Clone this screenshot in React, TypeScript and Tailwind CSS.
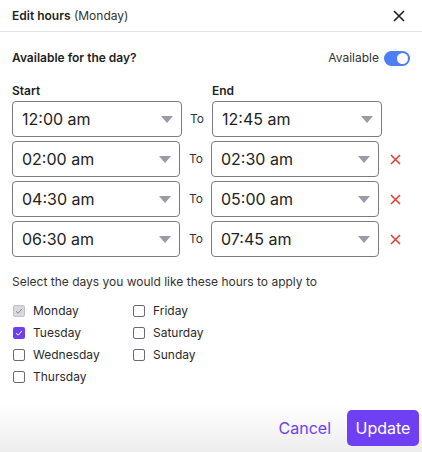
import React, { useState } from "react";

const rows = [
  { start: "12:00 am", end: "12:45 am", removable: false },
  { start: "02:00 am", end: "02:30 am", removable: true },
  { start: "04:30 am", end: "05:00 am", removable: true },
  { start: "06:30 am", end: "07:45 am", removable: true },
];

const Caret = () => (
  <svg width="12" height="7" viewBox="0 0 12 7" className="shrink-0">
    <path d="M0 0 L12 0 L6 7 Z" fill="#9c9aa6" />
  </svg>
);

const TimeSelect = ({ value, wide }: { value: string; wide: boolean }) => (
  <div
    className={`flex items-center justify-between h-[36px] border border-[#7b7a85] rounded-[4px] pl-[9px] pr-[8px] ${
      wide ? "w-[170px]" : "w-[168px]"
    }`}
  >
    <span className="text-[16px] text-[#222]">{value}</span>
    <Caret />
  </div>
);

const Check = ({ state }: { state: "disabled" | "checked" | "off" }) => {
  if (state === "disabled") {
    return (
      <span className="w-[12px] h-[12px] rounded-[2px] bg-[#d9d8de] border border-[#c4c3cb] flex items-center justify-center">
        <svg width="8" height="8" viewBox="0 0 8 8">
          <path d="M1 4.2 L3.2 6.2 L7 1.8" stroke="#8d8b96" strokeWidth="1" fill="none" />
        </svg>
      </span>
    );
  }
  if (state === "checked") {
    return (
      <span className="w-[12px] h-[12px] rounded-[2px] bg-[#6e3ff3] flex items-center justify-center">
        <svg width="8" height="8" viewBox="0 0 8 8">
          <path d="M1 4.2 L3.2 6.2 L7 1.8" stroke="#fff" strokeWidth="1" fill="none" />
        </svg>
      </span>
    );
  }
  return <span className="w-[12px] h-[12px] rounded-[2px] border-[1.5px] border-[#6b6a75] bg-white" />;
};

const Day = ({ label, state }: { label: string; state: "disabled" | "checked" | "off" }) => (
  <label className="flex items-center gap-[8px] h-[22px] text-[12px] text-[#2a2a2a]">
    <Check state={state} />
    {label}
  </label>
);

export default function App() {
  const [available, setAvailable] = useState(true);

  return (
    <div
      className="w-[422px] h-[452px] bg-white flex flex-col text-[#1f1f1f] overflow-hidden"
      style={{ fontFamily: "Inter, 'Liberation Sans', sans-serif" }}
    >
      {/* header */}
      <div className="flex items-center justify-between h-[32px] px-[12px] border-b border-[#e4e4ea]">
        <div className="text-[12px]">
          <span className="font-semibold">Edit hours</span>{" "}
          <span className="text-[#333]">(Monday)</span>
        </div>
        <svg width="12" height="12" viewBox="0 0 12 12" className="mr-[5px]">
          <path d="M1 1 L11 11 M11 1 L1 11" stroke="#222" strokeWidth="1.6" />
        </svg>
      </div>

      <div className="flex-1 px-[12px]">
        <div className="flex items-center justify-between mt-[18px] h-[16px]">
          <span className="text-[12px] font-semibold">Available for the day?</span>
          <div className="flex items-center gap-[5px]">
            <span className="text-[12px] text-[#333]">Available</span>
            <button
              onClick={() => setAvailable(!available)}
              className={`w-[26px] h-[15px] rounded-full flex items-center p-[2px] ${
                available ? "bg-[#4d7ff2] justify-end" : "bg-[#ccc] justify-start"
              }`}
            >
              <span className="w-[11px] h-[11px] rounded-full bg-white" />
            </button>
          </div>
        </div>

        <div className="flex mt-[20px] h-[10px] items-center text-[12px] font-semibold">
          <span className="w-[200px]">Start</span>
          <span>End</span>
        </div>

        <div className="flex flex-col gap-[4px] mt-[5px]">
          {rows.map((r) => (
            <div key={r.start} className="flex items-center">
              <TimeSelect value={r.start} wide={!r.removable} />
              <span
                className={`text-[12px] text-[#333] ${
                  r.removable ? "w-[31px] pl-[9px]" : "w-[30px] pl-[8px]"
                }`}
              >
                To
              </span>
              <TimeSelect value={r.end} wide={!r.removable} />
              {r.removable && (
                <svg width="11" height="11" viewBox="0 0 11 11" className="ml-[11px]">
                  <path d="M1 1 L10 10 M10 1 L1 10" stroke="#e53935" strokeWidth="1.5" />
                </svg>
              )}
            </div>
          ))}
        </div>

        <p className="text-[12px] text-[#333] mt-[16px]">
          Select the days you would like these hours to apply to
        </p>

        <div className="flex mt-[9px] pl-[1px]">
          <div className="w-[120px] flex flex-col">
            <Day label="Monday" state="disabled" />
            <Day label="Tuesday" state="checked" />
            <Day label="Wednesday" state="off" />
            <Day label="Thursday" state="off" />
          </div>
          <div className="flex flex-col">
            <Day label="Friday" state="off" />
            <Day label="Saturday" state="off" />
            <Day label="Sunday" state="off" />
          </div>
        </div>
      </div>

      <div className="h-[48px] flex items-center justify-end gap-[16px] pr-[3px] bg-gradient-to-b from-white to-[#ededed]">
        <button className="text-[16px] text-[#6e3ff3]">Cancel</button>
        <button className="h-[36px] w-[72px] rounded-[5px] bg-[#6e3ff3] text-white text-[16px]">
          Update
        </button>
      </div>
    </div>
  );
}
